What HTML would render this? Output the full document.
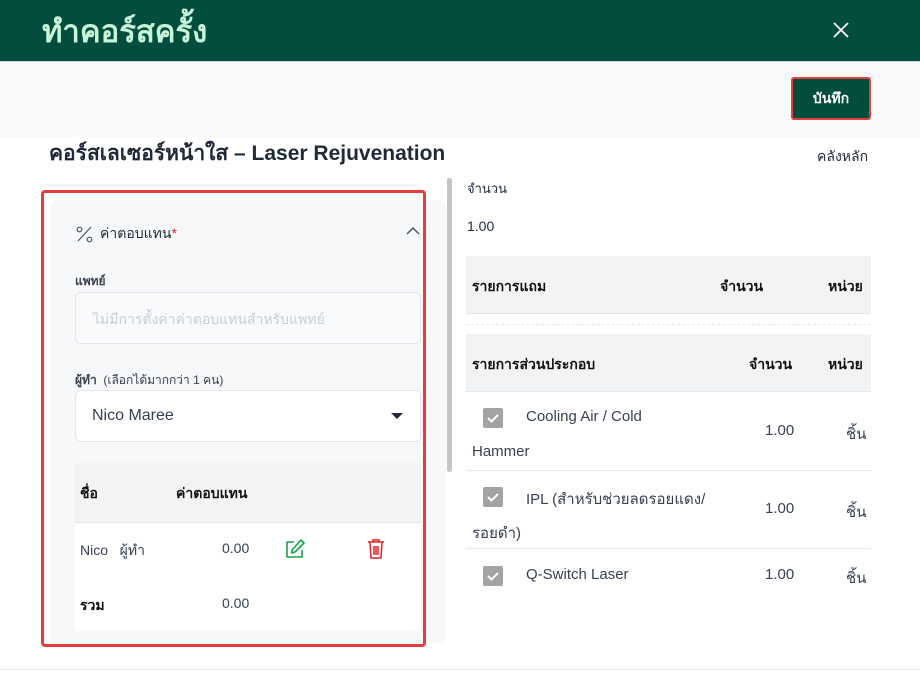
<!DOCTYPE html>
<html><head><meta charset="utf-8"><style>
*{box-sizing:border-box;margin:0;padding:0}
body{width:920px;height:677px;overflow:hidden;background:#fff;font-family:"Liberation Sans","Noto Sans CJK SC",sans-serif;color:#1f2937;position:relative}
.a{position:absolute;white-space:nowrap}
</style></head><body>
<div class="a" style="left:0;top:0;width:920px;height:61px;background:#034d3f"></div>
<div class="a" style="left:42px;top:12px;font-size:31px;color:#c6f5d8;font-weight:bold;line-height:40px">ทำคอร์สครั้ง</div>
<svg class="a" style="left:833px;top:22px" width="16" height="16" viewBox="0 0 16 16"><path d="M1 1L15 15M15 1L1 15" stroke="#fff" stroke-width="1.8"/></svg>
<div class="a" style="left:0;top:61px;width:920px;height:76px;background:#f8f9fb;border-top:1px solid #cfd8d4"></div>
<div class="a" style="left:791px;top:77px;width:80px;height:43px;background:#034d3f;border:2px solid #e53e3e;border-radius:3px;color:#fff;font-size:14px;font-weight:bold;text-align:center;line-height:39px">บันทึก</div>
<div class="a" style="left:49px;top:141px;font-size:21px;font-weight:bold;color:#1f2937;line-height:26px">คอร์สเลเซอร์หน้าใส – Laser Rejuvenation</div>
<div class="a" style="left:817px;top:147px;font-size:14px;line-height:18px">คลังหลัก</div>

<div class="a" style="left:50px;top:200px;width:396px;height:443px;background:#f7f8fa;border-radius:8px"></div>
<div class="a" style="left:447px;top:178px;width:5px;height:294px;background:#c4c4c4;border-radius:3px"></div>
<div class="a" style="left:41px;top:190px;width:385px;height:457px;border:3px solid #e53e3e;border-radius:4px"></div>
<svg class="a" style="left:76px;top:226px" width="17" height="17" viewBox="0 0 17 17"><circle cx="3.5" cy="3.5" r="2.3" fill="none" stroke="#4b5563" stroke-width="1.2"/><circle cx="13.5" cy="13.5" r="2.3" fill="none" stroke="#4b5563" stroke-width="1.2"/><path d="M15 1L2 15" stroke="#4b5563" stroke-width="1.2"/></svg>
<div class="a" style="left:100px;top:224px;font-size:14px;line-height:18px">ค่าตอบแทน<span style="color:#dc2626">*</span></div>
<svg class="a" style="left:406px;top:226px" width="14" height="10" viewBox="0 0 14 10"><path d="M1 8L7 2L13 8" fill="none" stroke="#4b5563" stroke-width="1.5"/></svg>
<div class="a" style="left:75px;top:272px;font-size:12px;font-weight:bold;color:#374151">แพทย์</div>
<div class="a" style="left:75px;top:292px;width:346px;height:52px;background:#f9fafb;border:1px solid #e5e7eb;border-radius:6px"></div>
<div class="a" style="left:93px;top:309px;font-size:14px;color:#c9cdd3">ไม่มีการตั้งค่าค่าตอบแทนสำหรับแพทย์</div>
<div class="a" style="left:75px;top:371px;font-size:12px;color:#374151"><b>ผู้ทำ</b>&nbsp; (เลือกได้มากกว่า 1 คน)</div>
<div class="a" style="left:75px;top:390px;width:346px;height:52px;background:#fff;border:1px solid #e5e7eb;border-radius:6px"></div>
<div class="a" style="left:92px;top:407px;font-size:16px;color:#374151">Nico Maree</div>
<svg class="a" style="left:391px;top:413px" width="12" height="7" viewBox="0 0 12 7"><path d="M0 0H12L6 6Z" fill="#1f2937"/></svg>
<div class="a" style="left:75px;top:463px;width:346px;height:60px;background:#f1f3f5;border-bottom:1px solid #e5e7eb"></div>
<div class="a" style="left:75px;top:523px;width:346px;height:108px;background:#fff"></div>
<div class="a" style="left:80px;top:483px;font-size:14px;font-weight:bold;color:#111">ชื่อ</div>
<div class="a" style="left:176px;top:483px;font-size:14px;font-weight:bold;color:#111">ค่าตอบแทน</div>
<div class="a" style="left:80px;top:540px;font-size:14px;color:#374151">Nico &nbsp;&nbsp;ผู้ทำ</div>
<div class="a" style="left:222px;top:540px;font-size:14px;color:#374151">0.00</div>
<svg class="a" style="left:284px;top:538px" width="22" height="22" viewBox="0 0 22 22"><path d="M10 4H3V19H18V12" fill="none" stroke="#16a34a" stroke-width="1.6" stroke-linejoin="round"/><path d="M17 2L20 5L11 14L7.5 15L8.5 11.5Z" fill="none" stroke="#16a34a" stroke-width="1.6" stroke-linejoin="round"/></svg>
<svg class="a" style="left:366px;top:538px" width="20" height="22" viewBox="0 0 20 22"><path d="M2 4H18M7 4V2H13V4M4 4L5 20H15L16 4M8 8V17M10 8V17M12 8V17" fill="none" stroke="#dc2626" stroke-width="1.5"/></svg>
<div class="a" style="left:80px;top:595px;font-size:14px;font-weight:bold;color:#111">รวม</div>
<div class="a" style="left:222px;top:595px;font-size:14px;color:#374151">0.00</div>
<div class="a" style="left:0;top:669px;width:920px;height:1px;background:#e5e7eb"></div>

<div class="a" style="left:467px;top:178px;font-size:13px">จำนวน</div>
<div class="a" style="left:467px;top:218px;font-size:14px">1.00</div>
<div class="a" style="left:466px;top:256px;width:405px;height:58px;background:#f1f3f5;border-bottom:1px solid #e2e8f0"></div>
<div class="a" style="left:472px;top:276px;font-size:14px;font-weight:bold;color:#111">รายการแถม</div>
<div class="a" style="left:720px;top:276px;font-size:14px;font-weight:bold;color:#111">จำนวน</div>
<div class="a" style="left:828px;top:276px;font-size:14px;font-weight:bold;color:#111">หน่วย</div>
<div class="a" style="left:466px;top:324px;width:405px;border-top:1px dashed #e2e8f0"></div>
<div class="a" style="left:466px;top:334px;width:405px;height:58px;background:#f1f3f5;border-bottom:1px solid #e2e8f0"></div>
<div class="a" style="left:472px;top:354px;font-size:14px;font-weight:bold;color:#111">รายการส่วนประกอบ</div>
<div class="a" style="left:749px;top:354px;font-size:14px;font-weight:bold;color:#111">จำนวน</div>
<div class="a" style="left:828px;top:354px;font-size:14px;font-weight:bold;color:#111">หน่วย</div>

<div class="a" style="left:466px;top:470px;width:405px;height:1px;background:#e5e7eb"></div>
<div class="a" style="left:466px;top:548px;width:405px;height:1px;background:#e5e7eb"></div>

<svg class="a" style="left:483px;top:408px" width="20" height="20"><rect width="20" height="20" rx="2" fill="#a3a3a3"/><path d="M5 10L8.5 13.5L15 7" fill="none" stroke="#fff" stroke-width="2"/></svg>
<div class="a" style="left:526px;top:408px;font-size:15px;color:#374151">Cooling Air / Cold</div>
<div class="a" style="left:472px;top:443px;font-size:15px;color:#374151">Hammer</div>
<div class="a" style="left:765px;top:422px;font-size:15px;color:#374151">1.00</div>
<div class="a" style="left:846px;top:422px;font-size:15px;color:#374151">ชิ้น</div>

<svg class="a" style="left:483px;top:487px" width="20" height="20"><rect width="20" height="20" rx="2" fill="#a3a3a3"/><path d="M5 10L8.5 13.5L15 7" fill="none" stroke="#fff" stroke-width="2"/></svg>
<div class="a" style="left:526px;top:487px;font-size:15px;color:#374151">IPL (สำหรับช่วยลดรอยแดง/</div>
<div class="a" style="left:472px;top:521px;font-size:15px;color:#374151">รอยดำ)</div>
<div class="a" style="left:765px;top:500px;font-size:15px;color:#374151">1.00</div>
<div class="a" style="left:846px;top:500px;font-size:15px;color:#374151">ชิ้น</div>

<svg class="a" style="left:483px;top:566px" width="20" height="20"><rect width="20" height="20" rx="2" fill="#a3a3a3"/><path d="M5 10L8.5 13.5L15 7" fill="none" stroke="#fff" stroke-width="2"/></svg>
<div class="a" style="left:526px;top:566px;font-size:15px;color:#374151">Q-Switch Laser</div>
<div class="a" style="left:765px;top:566px;font-size:15px;color:#374151">1.00</div>
<div class="a" style="left:846px;top:566px;font-size:15px;color:#374151">ชิ้น</div>
</body></html>
